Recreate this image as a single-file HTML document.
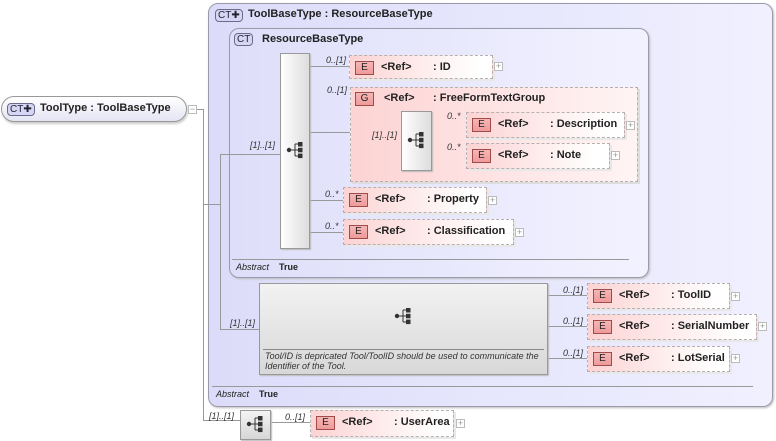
<!DOCTYPE html>
<html><head><meta charset="utf-8"><style>
*{margin:0;padding:0;box-sizing:border-box}
body{width:776px;height:441px;background:#fff;position:relative;overflow:hidden;font-family:"Liberation Sans",Arial,sans-serif;font-size:11px;color:#222}
.a{position:absolute}
.ct{position:absolute;border:1px solid #6a6a8a;border-radius:4px;background:#d6d6f4;font-size:10px;line-height:11px;padding:0 2px;color:#223;height:13px}
.el{position:absolute;border:1px dashed #b8b0b0;background:linear-gradient(to right,#fcd3d3,#fff 90%);box-shadow:2px 2px 0 #e8e8e8;font-weight:bold;font-size:11px}
.eb{position:absolute;left:5px;top:5px;width:19px;height:14px;border:1px solid #a04a4a;background:linear-gradient(#f6b6b6,#ee9a9a);font-weight:normal;font-size:10px;text-align:center;line-height:12px;color:#222}
.el .r{position:absolute;left:31px;top:5px}
.el .n{position:absolute;top:5px}
.pl{position:absolute;width:9px;height:9px;border:1px solid #bbb;background:#fff;font-size:9px;line-height:7px;text-align:center;color:#999}
.m{position:absolute;font-style:italic;font-size:9px;color:#333}
.seq{position:absolute;border:1px solid #999;background:linear-gradient(to right,#fff,#ddd);box-shadow:1px 1px 1px #bbb}
</style></head><body>
<!-- outer CT -->
<div class="a" style="left:208px;top:3px;width:565px;height:404px;border:1px solid #9a9aaa;border-radius:10px;background:linear-gradient(to right,#dcdcfa,#f0f0ff);box-shadow:1px 1px 2px #bbb"></div>
<div class="ct" style="left:215px;top:9px">CT✚</div>
<div class="a" style="left:248px;top:8px;font-weight:bold;font-size:11px">ToolBaseType : ResourceBaseType</div>
<!-- inner CT -->
<div class="a" style="left:229px;top:28px;width:420px;height:250px;border:1px solid #9a9aaa;border-radius:10px;background:linear-gradient(to right,#dedefa,#f2f2ff);box-shadow:1px 1px 2px #bbb"></div>
<div class="ct" style="left:234px;top:33px">CT</div>
<div class="a" style="left:262px;top:33px;font-weight:bold;font-size:11px">ResourceBaseType</div>
<div class="a" style="left:232px;top:259px;width:397px;height:1px;background:#999"></div>
<div class="a" style="left:236px;top:262px;font-style:italic;font-size:9px">Abstract</div>
<div class="a" style="left:279px;top:262px;font-weight:bold;font-size:9px">True</div>
<div class="a" style="left:212px;top:386px;width:541px;height:1px;background:#999"></div>
<div class="a" style="left:216px;top:389px;font-style:italic;font-size:9px">Abstract</div>
<div class="a" style="left:259px;top:389px;font-weight:bold;font-size:9px">True</div>

<svg class="a" style="left:0;top:0" width="776" height="441">
<g stroke="#999" fill="none" stroke-width="1" shape-rendering="crispEdges">
<path d="M196 109.5H203.5V420.5H240M203 204.5H220.5V154.5H280M220.5 204V329.5H259"/>
<path d="M309 66.5H349M309 132.5H350M309 200.5H343M309 232.5H343"/>
<path d="M350 141.5H401M431 125.5H466M431 155.5H466"/>
<path d="M547 295.5H587M547 326.5H587M547 358.5H587M270 422.5H310"/>
</g></svg>

<!-- ToolType -->
<div class="a" style="left:1px;top:96px;width:186px;height:26px;border:1px solid #999;border-radius:13px;background:linear-gradient(#fff,#e4e4f4);box-shadow:1px 2px 2px #ccc"></div>
<div class="ct" style="left:7px;top:103px">CT✚</div>
<div class="a" style="left:40px;top:102px;font-weight:bold">ToolType : ToolBaseType</div>
<div class="pl" style="left:188px;top:105px">−</div>

<!-- seq bars -->
<div class="seq" style="left:280px;top:53px;width:30px;height:196px"></div>
<div class="m" style="left:250px;top:140px">[1]..[1]</div>

<div class="m" style="left:326px;top:55px">0..[1]</div>
<div class="el" style="left:349px;top:55px;width:144px;height:24px"><div class="eb">E</div><span class="r">&lt;Ref&gt;</span><span class="n" style="left:83px">: ID</span></div>
<div class="pl" style="left:494px;top:62px">+</div>

<div class="m" style="left:327px;top:85px">0..[1]</div>
<div class="a" style="left:350px;top:87px;width:288px;height:95px;border:1px dashed #b8b0b0;background:linear-gradient(to right,#fdd3d3,#fff4f4);box-shadow:2px 2px 0 #ddd"></div>
<div class="eb" style="left:355px;top:92px">G</div>
<div class="a" style="left:384px;top:92px;font-weight:bold">&lt;Ref&gt;</div>
<div class="a" style="left:433px;top:92px;font-weight:bold">: FreeFormTextGroup</div>
<div class="m" style="left:372px;top:130px">[1]..[1]</div>
<div class="seq" style="left:401px;top:111px;width:31px;height:60px"></div>
<div class="m" style="left:447px;top:111px">0..*</div>
<div class="el" style="left:466px;top:112px;width:159px;height:26px"><div class="eb">E</div><span class="r">&lt;Ref&gt;</span><span class="n" style="left:83px">: Description</span></div>
<div class="pl" style="left:626px;top:121px">+</div>
<div class="m" style="left:447px;top:142px">0..*</div>
<div class="el" style="left:466px;top:143px;width:144px;height:26px"><div class="eb">E</div><span class="r">&lt;Ref&gt;</span><span class="n" style="left:83px">: Note</span></div>
<div class="pl" style="left:611px;top:151px">+</div>

<div class="m" style="left:325px;top:189px">0..*</div>
<div class="el" style="left:343px;top:187px;width:144px;height:26px"><div class="eb">E</div><span class="r">&lt;Ref&gt;</span><span class="n" style="left:83px">: Property</span></div>
<div class="pl" style="left:488px;top:196px">+</div>
<div class="m" style="left:325px;top:221px">0..*</div>
<div class="el" style="left:343px;top:219px;width:171px;height:26px"><div class="eb">E</div><span class="r">&lt;Ref&gt;</span><span class="n" style="left:83px">: Classification</span></div>
<div class="pl" style="left:515px;top:228px">+</div>

<!-- big seq -->
<div class="m" style="left:230px;top:318px">[1]..[1]</div>
<div class="a" style="left:259px;top:283px;width:289px;height:92px;border:1px solid #999;background:linear-gradient(#f2f2f2,#d8d8d8);box-shadow:1px 1px 1px #bbb"></div>
<div class="a" style="left:263px;top:349px;width:281px;height:1px;background:#888"></div>
<div class="a" style="left:265px;top:351px;font-style:italic;font-size:9px;line-height:10px;width:280px;color:#333">Tool/ID is depricated Tool/ToolID should be used to communicate the Identifier of the Tool.</div>

<div class="m" style="left:563px;top:285px">0..[1]</div>
<div class="el" style="left:587px;top:283px;width:143px;height:26px"><div class="eb">E</div><span class="r">&lt;Ref&gt;</span><span class="n" style="left:83px">: ToolID</span></div>
<div class="pl" style="left:731px;top:292px">+</div>
<div class="m" style="left:563px;top:316px">0..[1]</div>
<div class="el" style="left:587px;top:314px;width:170px;height:26px"><div class="eb">E</div><span class="r">&lt;Ref&gt;</span><span class="n" style="left:83px">: SerialNumber</span></div>
<div class="pl" style="left:758px;top:322px">+</div>
<div class="m" style="left:563px;top:348px">0..[1]</div>
<div class="el" style="left:587px;top:346px;width:143px;height:26px"><div class="eb">E</div><span class="r">&lt;Ref&gt;</span><span class="n" style="left:83px">: LotSerial</span></div>
<div class="pl" style="left:731px;top:354px">+</div>

<!-- bottom -->
<div class="m" style="left:209px;top:411px">[1]..[1]</div>
<div class="seq" style="left:240px;top:410px;width:31px;height:30px;background:linear-gradient(#f4f4f4,#d6d6d6)"></div>
<div class="m" style="left:285px;top:412px">0..[1]</div>
<div class="el" style="left:310px;top:410px;width:144px;height:27px"><div class="eb">E</div><span class="r">&lt;Ref&gt;</span><span class="n" style="left:83px">: UserArea</span></div>
<div class="pl" style="left:456px;top:419px">+</div>

<!-- seq icons -->
<svg class="a" style="left:0;top:0" width="776" height="441">
<defs><g id="si" fill="#333" stroke="#333">
<circle cx="0" cy="0" r="2.2" stroke="none"/><path d="M0 0H6M6 -6V6M6 -6H10M6 0H10M6 6H10" fill="none" stroke-width="1"/>
<rect x="9" y="-8" width="4.5" height="4.5" stroke="none"/><rect x="9" y="-2.2" width="4.5" height="4.5" stroke="none"/><rect x="9" y="3.6" width="4.5" height="4.5" stroke="none"/>
</g></defs>
<use href="#si" x="289" y="150"/>
<use href="#si" x="410" y="140"/>
<use href="#si" x="397" y="316"/>
<use href="#si" x="249" y="424"/>
</svg>
</body></html>
